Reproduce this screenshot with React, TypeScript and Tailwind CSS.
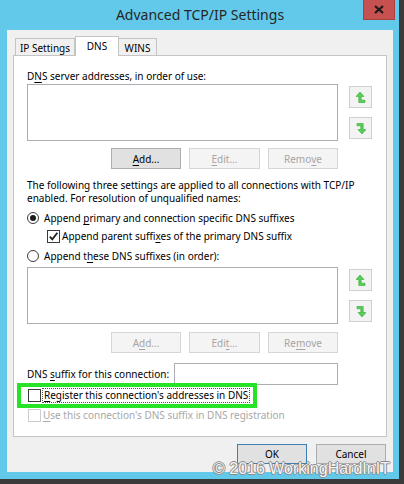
import type { ReactNode } from 'react'

const U = ({ children }: { children: ReactNode }) => (
  <span className="underline underline-offset-[2px]">{children}</span>
)

function Button({ label, className = '', disabled = false, focus = false }: { label: ReactNode; className?: string; disabled?: boolean; focus?: boolean }) {
  const look = disabled
    ? 'border-[#d6d6d6] bg-[#f4f4f4] text-[#a6a6a6]'
    : focus
      ? 'border-[#3c7fb1] bg-[#e1e1e1] text-black'
      : 'border-[#adadad] bg-[#e1e1e1] text-black'
  return <div className={`flex items-center justify-center border ${look} ${className}`}>{label}</div>
}

const MoveArrow = ({ down = false }: { down?: boolean }) => (
  <div className="flex h-[22px] w-[23px] items-center justify-center border border-[#cfcfcf] bg-[#f3f3f3]">
    <svg width="10" height="11" viewBox="0 0 10 11" className={down ? 'rotate-180' : ''}>
      <path d="M4 0 L8 4.5 L5.2 4.5 L5.2 8.2 L9 8.2 L9 10.5 L2.8 10.5 L2.8 4.5 L0 4.5 Z" fill="#57cf57" stroke="#34a834" strokeWidth="0.6" />
    </svg>
  </div>
)

const Radio = ({ on = false }: { on?: boolean }) => (
  <div className="flex h-[12px] w-[12px] items-center justify-center rounded-full border border-[#3a3a3a] bg-white">
    {on && <div className="h-[6px] w-[6px] rounded-full bg-[#1c1c1c]" />}
  </div>
)

const Check = ({ on = false, disabled = false }: { on?: boolean; disabled?: boolean }) => (
  <div className={`flex h-[13px] w-[13px] shrink-0 items-center justify-center border bg-white ${disabled ? 'border-[#cdcdcd]' : 'border-[#3a3a3a]'}`}>
    {on && (
      <svg width="11" height="11" viewBox="0 0 11 11">
        <path d="M1.8 5.6 L4.3 8.4 L9.4 1.8" fill="none" stroke="#1f1f1f" strokeWidth="1.8" />
      </svg>
    )}
  </div>
)

export default function App() {
  return (
    <div className="relative flex h-[484px] w-[404px] flex-col overflow-hidden border-r-[5px] border-b-[5px] border-[#3b3b3b] bg-[#63c9eb] font-['Noto_Sans',sans-serif] text-[10px] leading-[14px] text-black">
      {/* Title bar */}
      <div className="flex h-[30px] shrink-0">
        <div className="w-[37px]" />
        <div className="flex flex-1 items-center justify-center pb-[1px] text-[14px] text-[#262626]">Advanced TCP/IP Settings</div>
        <div className="mr-[4px] flex h-[20px] w-[32px] items-center justify-center border border-t-0 border-[#a94141] bg-[#c75050]">
          <svg width="10" height="9" viewBox="0 0 10 9">
            <path d="M1 1 L9 8 M9 1 L1 8" stroke="#1a1a1a" strokeWidth="2.2" />
          </svg>
        </div>
      </div>

      {/* Dialog body */}
      <div className="ml-[7px] flex h-[442px] w-[386px] flex-col bg-[#f0f0f0] px-[6px] pt-[6px]">
        {/* Tabs */}
        <div className="flex h-[19px] items-end pl-[2px]">
          <div className="flex h-[17px] w-[60px] items-center justify-center border border-b-0 border-[#c4c4c4] bg-[#f0f0f0] pt-[1px]">IP Settings</div>
          <div className="relative z-10 -mb-px flex h-[20px] w-[44px] justify-center border border-b-0 border-[#c4c4c4] bg-white pt-[2px]">DNS</div>
          <div className="flex h-[17px] w-[38px] items-center justify-center border border-b-0 border-l-0 border-[#c4c4c4] bg-[#f0f0f0] pt-[1px]">WINS</div>
        </div>

        {/* Tab page */}
        <div className="flex h-[382px] flex-col border border-[#c4c4c4] bg-white pt-[13px] pr-[14px] pl-[13px]">
          <div>
            D<U>N</U>S server addresses, in order of use:
          </div>
          <div className="mt-[1px] flex">
            <div className="h-[57px] w-[311px] border border-[#abadb3]" />
            <div className="ml-[11px] flex flex-col gap-[9px] pt-[2px]">
              <MoveArrow />
              <MoveArrow down />
            </div>
          </div>
          <div className="mt-[7px] flex w-[311px] justify-end gap-[8px]">
            <Button label={<><U>A</U>dd...</>} className="h-[21px] w-[70px]" />
            <Button label={<><U>E</U>dit...</>} className="h-[21px] w-[71px]" disabled />
            <Button label={<>Remo<U>v</U>e</>} className="h-[21px] w-[70px]" disabled />
          </div>

          <div className="mt-[10px] leading-[13px]">
            The following three settings are applied to all connections with TCP/IP
            <br />
            enabled. For resolution of unqualified names:
          </div>
          <div className="mt-[5px] flex h-[16px] items-center gap-[5px]">
            <Radio on />
            <span>
              Append <U>p</U>rimary and connection specific DNS suffixes
            </span>
          </div>
          <div className="mt-[2px] ml-[20px] flex h-[16px] items-center gap-[2px]">
            <Check on />
            <span>
              Append parent suffi<U>x</U>es of the primary DNS suffix
            </span>
          </div>
          <div className="mt-[4px] flex h-[16px] items-center gap-[5px]">
            <Radio />
            <span>
              Append t<U>h</U>ese DNS suffixes (in order):
            </span>
          </div>
          <div className="mt-[3px] flex">
            <div className="h-[57px] w-[311px] border border-[#abadb3]" />
            <div className="ml-[11px] flex flex-col gap-[9px] pt-[2px]">
              <MoveArrow />
              <MoveArrow down />
            </div>
          </div>
          <div className="mt-[8px] flex w-[311px] justify-end gap-[8px]">
            <Button label={<>A<U>d</U>d...</>} className="h-[21px] w-[70px]" disabled />
            <Button label={<>Edi<U>t</U>...</>} className="h-[21px] w-[71px]" disabled />
            <Button label={<>Re<U>m</U>ove</>} className="h-[21px] w-[70px]" disabled />
          </div>

          <div className="mt-[10px] flex w-[311px] items-center justify-between">
            <span>
              DNS <U>s</U>uffix for this connection:
            </span>
            <div className="h-[22px] w-[164px] border border-[#abadb3] bg-white" />
          </div>

          <div className="-mt-[2px] -ml-[10px] flex h-[25px] w-[240px] items-center gap-[1px] border-4 border-[#27e327] pl-[7px]">
            <Check />
            <span className="border border-dotted border-[#555] px-px leading-[13px]">
              <U>R</U>egister this connection's addresses in DNS
            </span>
          </div>
          <div className="flex h-[14px] items-center gap-[2px] pl-[1px] text-[#a8a8a8]">
            <Check disabled />
            <span>
              <U>U</U>se this connection's DNS suffix in DNS registration
            </span>
          </div>
        </div>

        {/* Dialog buttons */}
        <div className="mt-[7px] flex justify-end gap-[9px] pr-[1px]">
          <Button label="OK" className="h-[20px] w-[70px]" focus />
          <Button label="Cancel" className="h-[20px] w-[70px]" />
        </div>
      </div>

      {/* Watermark */}
      <div className="absolute top-[462px] left-[213px] font-['Liberation_Sans',sans-serif] text-[16px] leading-[14px] text-[#f4f4f4] [text-shadow:-1px_0_#8a8a8a,1px_0_#8a8a8a,0_-1px_#8a8a8a,0_1px_#8a8a8a]">
        © 2016 WorkingHardInIT
      </div>
    </div>
  )
}
